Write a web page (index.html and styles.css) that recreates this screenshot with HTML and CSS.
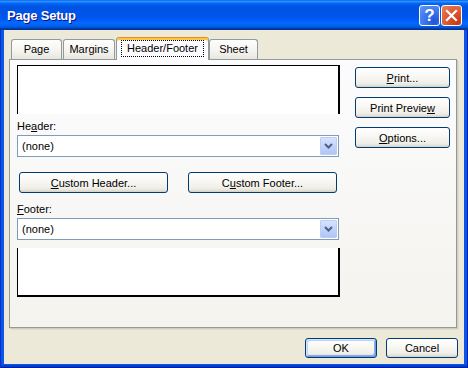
FILE: index.html
```html
<!DOCTYPE html>
<html>
<head>
<meta charset="utf-8">
<title>Page Setup</title>
<link rel="stylesheet" href="styles.css">
</head>
<body>
<div class="window">
  <div class="titlebar">
    <span class="title">Page Setup</span>
    <div class="tbtns">
      <span class="tb help">?</span>
      <span class="tb close"><svg width="13" height="13" viewBox="0 0 13 13"><path d="M2 2 L11 11 M11 2 L2 11" stroke="#fff" stroke-width="2.2" stroke-linecap="square" fill="none"/></svg></span>
    </div>
  </div>
  <div class="frame">
    <div class="client">
      <div class="tabs">
        <div class="tab t-page">Page</div>
        <div class="tab t-margins">Margins</div>
        <div class="tab active"><span class="focus">Header/Footer</span></div>
        <div class="tab t-sheet">Sheet</div>
      </div>
      <div class="panel">
        <div class="leftcol">
          <div class="preview ptop"></div>
          <div class="lbl lbl-header">He<u>a</u>der:</div>
          <div class="combo"><span class="val">(none)</span><span class="drop"><svg width="9" height="6" viewBox="0 0 9 6"><path d="M1 1 L4.5 4.5 L8 1" stroke="#4d6185" stroke-width="2" fill="none"/></svg></span></div>
          <div class="btnrow">
            <button class="btn wide"><u>C</u>ustom Header...</button>
            <button class="btn wide">C<u>u</u>stom Footer...</button>
          </div>
          <div class="lbl lbl-footer"><u>F</u>ooter:</div>
          <div class="combo"><span class="val">(none)</span><span class="drop"><svg width="9" height="6" viewBox="0 0 9 6"><path d="M1 1 L4.5 4.5 L8 1" stroke="#4d6185" stroke-width="2" fill="none"/></svg></span></div>
          <div class="preview pbottom"></div>
        </div>
        <div class="rightcol">
          <button class="btn side"><u>P</u>rint...</button>
          <button class="btn side">Print Previe<u>w</u></button>
          <button class="btn side"><u>O</u>ptions...</button>
        </div>
      </div>
      <div class="footer">
        <button class="btn dlg default">OK</button>
        <button class="btn dlg">Cancel</button>
      </div>
    </div>
  </div>
</div>
</body>
</html>
```

FILE: styles.css
```css
* { box-sizing: border-box; }
html, body { margin: 0; padding: 0; }
body {
  width: 468px;
  height: 368px;
  overflow: hidden;
  font-family: "Liberation Sans", Arial, sans-serif;
  font-size: 11px;
  color: #000;
  background: #fff;
}
.window {
  width: 468px;
  height: 368px;
  display: flex;
  flex-direction: column;
}
.titlebar {
  height: 30px;
  flex: none;
  display: flex;
  align-items: center;
  justify-content: space-between;
  padding: 0 6px 0 7px;
  background: linear-gradient(to bottom, #0058ee 0%, #3593ff 4%, #288eff 6%, #127dff 8%, #036ffc 10%, #0262ee 14%, #0057e5 20%, #0054e3 24%, #0055eb 56%, #005bf5 66%, #026afe 76%, #0062ef 86%, #0052d6 92%, #0040ab 94%, #003092 100%);
}
.title {
  color: #fff;
  font-weight: bold;
  font-size: 13px;
  letter-spacing: -0.2px;
  text-shadow: 1px 1px #0f1089;
  padding-top: 1px;
}
.tbtns { display: flex; gap: 1px; padding-top: 1px; }
.tb {
  width: 21px;
  height: 21px;
  border: 1px solid #fff;
  border-radius: 3px;
  display: flex;
  align-items: center;
  justify-content: center;
  color: #fff;
}
.help {
  background: radial-gradient(circle at 75% 80%, #1f55d8 0%, #3a74ee 45%, #6796f5 100%);
  font-weight: bold;
  font-size: 17px;
  line-height: 1;
}
.close {
  background: radial-gradient(circle at 80% 85%, #c73a10 0%, #dc5530 45%, #e8825e 100%);
}
.frame {
  flex: 1;
  display: flex;
  padding: 0 4px 4px 4px;
  background: #0a56ea;
  box-shadow: inset 1px 0 #0831c4, inset -1px 0 #0020a8, inset 0 -1px #001a98, inset 0 -3px #0040d0;
}
.client {
  flex: 1;
  background: #ece9d8;
  padding: 7px 7px 0 5px;
  display: flex;
  flex-direction: column;
}
.tabs {
  display: flex;
  align-items: flex-end;
  height: 22px;
  padding-left: 2px;
  position: relative;
  z-index: 2;
}
.tab {
  height: 20px;
  border: 1px solid #919b9c;
  border-bottom: none;
  border-radius: 3px 3px 0 0;
  background: linear-gradient(#fefefe, #f4f3ef 60%, #e8e6dc);
  text-align: center;
  line-height: 19px;
  flex: none;
}
.t-page { width: 51px; margin-right: 1px; }
.t-margins { width: 52px; margin-right: 1px; }
.t-sheet { width: 49px; }
.tab.active {
  width: 93px;
  height: 23px;
  margin-bottom: -1px;
  background: #fcfcfe;
  border-top: 1px solid #e68b2c;
  box-shadow: inset 0 2px #ffc73c;
  display: flex;
  align-items: flex-start;
  justify-content: center;
  padding-top: 2px;
  line-height: 15px;
}
.focus {
  border: 1px dotted #000;
  padding: 0 5px;
  height: 17px;
}
.panel {
  width: 448px;
  height: 269px;
  border: 1px solid #919b9c;
  background: linear-gradient(#fcfcfe, #f4f3ee);
  box-shadow: 1px 1px 0 #d0cdbd, 2px 2px 0 #e0ddcf;
  display: flex;
  padding: 5px 0 0 7px;
  flex: none;
}
.leftcol {
  width: 323px;
  display: flex;
  flex-direction: column;
}
.preview {
  background: #fff;
  width: 323px;
  height: 49px;
  border-left: 1px solid #000;
  border-right: 2px solid #000;
}
.ptop { border-top: 1px solid #000; }
.pbottom { border-bottom: 2px solid #000; margin-top: 8px; }
.lbl {
  line-height: 13px;
  height: 13px;
}
.lbl-header { margin-top: 6px; }
.lbl-footer { margin-top: 10px; }
.combo {
  margin-top: 2px;
  width: 322px;
  height: 22px;
  border: 1px solid #7f9db9;
  background: #fff;
  display: flex;
  align-items: stretch;
  justify-content: space-between;
  padding: 1px;
}
.val { padding-left: 3px; line-height: 18px; }
.drop {
  width: 17px;
  border: 1px solid #bccdf4;
  border-radius: 1px;
  background: linear-gradient(#d7e3fd, #c1d3fb 50%, #b1c6f6);
  display: flex;
  align-items: center;
  justify-content: center;
}
.btn {
  font-family: inherit;
  font-size: 11px;
  color: #000;
  height: 21px;
  border: 1px solid #003c74;
  border-radius: 3px;
  background: linear-gradient(#ffffff 0%, #f8f7f3 45%, #efeee8 80%, #e3e0d6 92%, #d6d0c5 100%);
  padding: 0;
  margin: 0;
  line-height: 18px;
}
.btnrow {
  display: flex;
  gap: 20px;
  margin-top: 15px;
  padding-left: 2px;
}
.wide { width: 149px; height: 21px; }
.rightcol {
  margin-left: 15px;
  padding-top: 2px;
  display: flex;
  flex-direction: column;
  gap: 9px;
}
.side { width: 95px; }
.footer {
  display: flex;
  justify-content: flex-end;
  gap: 9px;
  padding: 10px 0 0 0;
  margin-right: -1px;
}
.dlg { width: 72px; height: 20px; line-height: 17px; }
.default {
  box-shadow: inset 1px 1px 0 #cee7ff, inset -1px -1px 0 #6f9ee6, inset 2px 2px 0 #bcd4f6, inset -2px -2px 0 #89ade4;
}
u { text-decoration: underline; text-underline-offset: 1px; }
```
